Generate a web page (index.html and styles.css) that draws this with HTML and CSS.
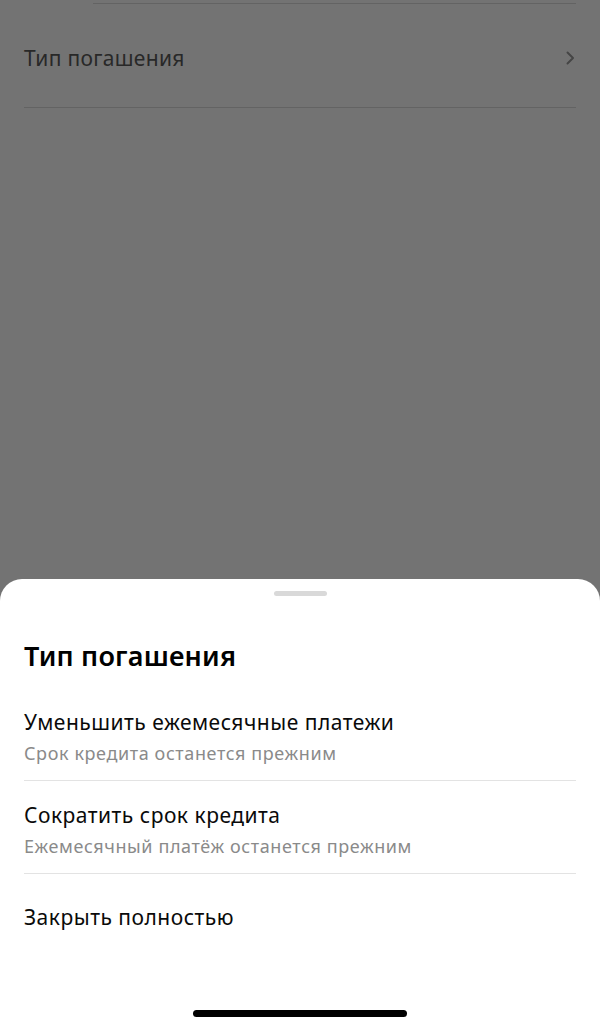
FILE: index.html
```html
<!DOCTYPE html>
<html lang="ru">
<head>
<meta charset="utf-8">
<title>Тип погашения</title>
<link rel="stylesheet" href="styles.css">
</head>
<body>
<div class="page">
  <div class="sep sep-inset"></div>
  <div class="nav-row">
    <span class="nav-label">Тип погашения</span>
    <svg class="chev" width="10" height="16" viewBox="0 0 10 16"><path d="M2.5 2.5 L8 8 L2.5 13.5" fill="none" stroke="#9a9a9a" stroke-width="2" stroke-linecap="round" stroke-linejoin="round"/></svg>
  </div>
  <div class="sep"></div>
</div>
<div class="scrim"></div>
<div class="sheet">
  <div class="grabber"></div>
  <h1 class="sheet-title">Тип погашения</h1>
  <div class="options">
    <div class="option">
      <div class="opt-title">Уменьшить ежемесячные платежи</div>
      <div class="opt-sub">Срок кредита останется прежним</div>
    </div>
    <div class="option">
      <div class="opt-title">Сократить срок кредита</div>
      <div class="opt-sub">Ежемесячный платёж останется прежним</div>
    </div>
    <div class="option option-last">
      <div class="opt-title">Закрыть полностью</div>
    </div>
  </div>
  <div class="home-indicator"></div>
</div>
</body>
</html>
```
FILE: styles.css
```css
* { box-sizing: border-box; }
html, body { margin: 0; padding: 0; }
body {
  width: 600px;
  height: 1027px;
  overflow: hidden;
  background: #ffffff;
  font-family: "Noto Sans", "Open Sans", sans-serif;
  color: #000;
}
.page {
  padding: 3px 24px 0 24px;
}
.sep {
  height: 1px;
  background: #dcdcdc;
}
.sep-inset {
  margin-left: 69px;
}
.nav-row {
  height: 103px;
  padding-top: 4px;
  display: flex;
  align-items: center;
  justify-content: space-between;
}
.nav-label {
  font-size: 21px;
  letter-spacing: 0.3px;
  color: #5a5a5a;
}
.chev { margin-right: 1px; }
.scrim {
  position: fixed;
  inset: 0;
  background: rgba(0, 0, 0, 0.55);
}
.sheet {
  position: fixed;
  left: 0;
  right: 0;
  top: 579px;
  bottom: 0;
  background: #fff;
  border-radius: 22px 22px 0 0;
  display: flex;
  flex-direction: column;
  padding: 0 24px;
}
.grabber {
  width: 53px;
  height: 5px;
  border-radius: 3px;
  background: #d9d9d9;
  margin: 12px auto 0;
}
.sheet-title {
  margin: 43px 0 0;
  font-size: 27px;
  line-height: 34px;
  letter-spacing: 0.2px;
  font-weight: 600;
  color: #000;
}
.options {
  margin-top: 22px;
}
.option {
  padding: 21px 0 16px;
  border-bottom: 1px solid #e3e3e3;
}
.option:first-child { padding-top: 14px; }
.option-last {
  padding-top: 30px;
  border-bottom: none;
}
.opt-title {
  font-size: 21px;
  line-height: 26px;
  letter-spacing: 0.5px;
  color: #0a0a0a;
}
.opt-sub {
  margin-top: 7px;
  font-size: 18px;
  line-height: 22px;
  letter-spacing: 0.6px;
  color: #8a8a8a;
}
.home-indicator {
  margin: auto auto 10px;
  width: 214px;
  height: 7px;
  border-radius: 4px;
  background: #000;
}
```
